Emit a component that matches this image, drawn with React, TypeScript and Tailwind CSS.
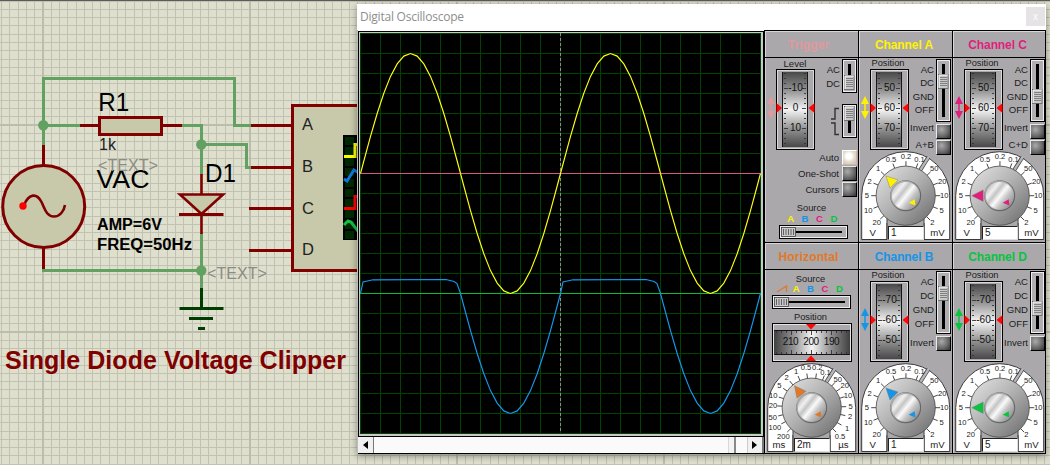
import React from "react";

const YELLOW = "#fff200";
const BLUE = "#1694e8";
const PINK = "#e01f7c";
const GREEN = "#08c440";
const ORANGE = "#e0782a";

function Schematic() {
  const wire = "#63a163";
  const red = "#800000";
  const minor: number[] = [];
  for (let i = -5; i < 130; i++) minor.push(i);
  return (
    <svg width="1050" height="465" className="block" fontFamily="Liberation Sans, Arial, sans-serif">
      <rect width="1050" height="465" fill="#dfdfce" />
      <g fill="#c2c2b2" shapeRendering="crispEdges">
        {minor.map((i) => (
          <rect key={"v" + i} x={Math.round(42.5 + i * 8.28)} y="0" width="1" height="465" />
        ))}
        {minor.slice(0, 65).map((i) => (
          <rect key={"h" + i} x="0" y={Math.round(124.7 + (i - 10) * 8.27)} width="1050" height="1" />
        ))}
        {[42, 249, 456, 663, 870].map((x) => (
          <rect key={x} x={x} y="0" width="2" height="465" fill="#bdbdae" />
        ))}
        {[124, 331].map((y) => (
          <rect key={y} x="0" y={y} width="1050" height="2" fill="#bdbdae" />
        ))}
      </g>
      <rect width="1050" height="1" fill="#5c5a5c" />

      <g fill="none" stroke={wire} strokeWidth="3">
        <path d="M43.5 145V78.5H234.5V125.5H251" />
        <path d="M43 125.5H81M182 125.5H201.5V175" />
        <path d="M201.5 144.5H246.5V167.5H252" />
        <path d="M201.5 233V289M42 270.5H201.5" />
      </g>
      <g fill={wire}>
        <circle cx="43.3" cy="125.3" r="5.2" />
        <circle cx="201.3" cy="144.5" r="5.2" />
        <circle cx="201.3" cy="270.5" r="5.2" />
      </g>

      <g fill="none" stroke={red} strokeWidth="3">
        <path d="M43.5 145V166M43.5 248V269M80 125.5H98M163 125.5H182" />
        <rect x="99.5" y="117.5" width="62" height="17" fill="#c8c8aa" />
        <path d="M201.5 174V194M201.5 214V234M180 194.5H223L201.5 214Z" fill="#c8c8aa" strokeWidth="2.6" />
        <path d="M179 214.5H223.5" />
        <circle cx="43.7" cy="206.5" r="41" fill="#c8c8aa" />
        <path d="M24 205C29 193 37 193 41.5 202C45 209 46 216 54 216.5C60 216.5 64 211 65 205" strokeWidth="2.6" />
        <rect x="292.5" y="105.5" width="80" height="165" fill="#c8c8aa" />
        <path d="M251 125.5H292M251 167.5H292M249 208.5H292M249 250.5H292" />
      </g>
      <circle cx="23" cy="206" r="3.7" fill="#ff0000" />

      <g stroke="#003c00" strokeWidth="3">
        <path d="M201.5 288V308M179.5 308.5H223.5M189 318.5H213M198 328.5H205" />
      </g>

      <rect x="343" y="135" width="30" height="105" fill="#000" />
      <g fill="#002800">
        {[137, 147, 158, 168, 179, 189, 199, 210, 221, 231].map((y) => (
          <rect key={y} x="345" y={y} width="9" height="8" />
        ))}
      </g>
      <g fill="none" strokeWidth="3">
        <path d="M344 156.5H355V144.5H360" stroke="#ffff00" />
        <path d="M344 179L347 181L354 170L359 173" stroke="#0a78e0" />
        <path d="M344 208.5H355V196.5H360" stroke="#ff0000" />
        <path d="M344 225L348 221L351 222L358 231" stroke="#10c040" />
      </g>

      <g fill="#000">
        <text x="98.3" y="110.7" fontSize="25.5" textLength="31" lengthAdjust="spacingAndGlyphs">R1</text>
        <text x="99" y="150" fontSize="16" fill="#222">1k</text>
        <text x="96.5" y="187.8" fontSize="25.5" textLength="53" lengthAdjust="spacingAndGlyphs">VAC</text>
        <text x="205" y="181.7" fontSize="25.5" textLength="31" lengthAdjust="spacingAndGlyphs">D1</text>
        <text x="97" y="230" fontSize="16" fontWeight="bold" textLength="65" lengthAdjust="spacingAndGlyphs">AMP=6V</text>
        <text x="97" y="250" fontSize="16" fontWeight="bold" textLength="95" lengthAdjust="spacingAndGlyphs">FREQ=50Hz</text>
      </g>
      <g fill="#222" fontSize="16.5">
        <text x="302" y="130">A</text>
        <text x="302" y="172.3">B</text>
        <text x="302" y="213.5">C</text>
        <text x="302" y="255.2">D</text>
      </g>
      <g fill="#8c8c84" fontSize="16">
        <text x="98" y="170.5" textLength="60" lengthAdjust="spacingAndGlyphs">&lt;TEXT&gt;</text>
        <text x="207" y="279" textLength="60" lengthAdjust="spacingAndGlyphs">&lt;TEXT&gt;</text>
      </g>
      <text x="5" y="369" fontSize="25" fontWeight="bold" fill="#800000" textLength="341">
        Single Diode Voltage Clipper
      </text>
    </svg>
  );
}

function sinePoints(from: number, to: number, shift: number, mid: number) {
  const xs = [from];
  for (let x = from + 10 / 3; x < to; x += 20 / 3) xs.push(x);
  xs.push(to);
  return xs
    .map((x) => `${(shift + x + 0.5).toFixed(2)},${(mid - 120 * Math.sin((x * Math.PI) / 100)).toFixed(1)}`)
    .join(" ");
}

function clippedTop(o: number) {
  return ` ${o + 0.5},260.5 ${o + 3},249 ${o + 13},246.8 ${o + 86},246.5 ${o + 94},248.5 ${o + 97},250.5 `;
}

function Plot() {
  const lines = Array.from({ length: 21 }, (_, i) => i * 20);
  return (
    <svg width="401" height="401" className="block bg-black">
      <g fill="#004200" shapeRendering="crispEdges">
        {lines.map((v) => (
          <React.Fragment key={v}>
            <rect x={v} y="0" width="1" height="401" />
            <rect x="0" y={v} width="401" height="1" />
          </React.Fragment>
        ))}
      </g>
      <path d="M200.5 0V400" stroke="#8c8c8c" strokeDasharray="3 2" />
      <rect y="140" width="401" height="1" fill="#d8587c" />
      <rect y="260" width="401" height="1" fill="#10b838" />
      <g fill="none" strokeWidth="1.15">
        <polyline points={sinePoints(0, 400, 0, 140.5)} stroke="#ffff10" />
        <polyline
          points={clippedTop(0) + sinePoints(100, 200, 0, 260.5) + clippedTop(200) + sinePoints(100, 200, 200, 260.5)}
          stroke="#1698ec"
        />
      </g>
    </svg>
  );
}

function VWheel({ labels, color, id }: { labels: string[]; color: string; id: string }) {
  const ticks = Array.from({ length: 15 }, (_, i) => 5 + i * 5);
  return (
    <div className="flex">
      <svg width="11" height="81" className="block shrink-0">
        <path d="M6 27L10 35H2ZM6 50L2 42H10Z" fill={color} />
        <path d="M6 32V45" stroke={color} strokeWidth="1.5" />
      </svg>
      <svg width="39" height="81" className="block shrink-0" fontFamily="Liberation Sans, Arial, sans-serif">
        <defs>
          <linearGradient id={id} x2="0" y2="1">
            <stop offset="0" stopColor="#484848" />
            <stop offset=".25" stopColor="#959595" />
            <stop offset=".5" stopColor="#f4f4f4" />
            <stop offset=".75" stopColor="#959595" />
            <stop offset="1" stopColor="#484848" />
          </linearGradient>
        </defs>
        <rect x=".5" y=".5" width="38" height="80" fill="#aaa8ab" stroke="#000" />
        <rect x="1.5" y="1.5" width="36" height="78" fill="none" stroke="#e4e4e4" strokeWidth=".8" />
        <rect x="6" y="3" width="26" height="75" fill={`url(#${id})`} />
        <path d="M6.5 3V78M31.5 3V78" stroke="#151515" />
        {ticks.map((y, i) => (
          <path key={y} d={`M8 ${y - 0.5}h${i % 4 === 3 ? 4 : 2}M30 ${y - 0.5}h-${i % 4 === 3 ? 4 : 2}`} stroke="#333" strokeWidth=".9" />
        ))}
        <path d="M0.5 34L6 39L0.5 44ZM38.5 34L32.5 39L38.5 44Z" fill="#ff0808" />
        <g fontSize="10" textAnchor="middle" fill="#111">
          <text x="19.5" y="22">{labels[0]}</text>
          <text x="19.5" y="42.300">{labels[1]}</text>
          <text x="19.5" y="62">{labels[2]}</text>
        </g>
      </svg>
    </div>
  );
}

function HWheel() {
  const ticks = Array.from({ length: 15 }, (_, i) => 5 + i * 5);
  return (
    <svg width="80" height="39" className="block shrink-0" fontFamily="Liberation Sans, Arial, sans-serif">
      <defs>
        <linearGradient id="hw">
          <stop offset="0" stopColor="#404040" />
          <stop offset=".25" stopColor="#909090" />
          <stop offset=".5" stopColor="#f4f4f4" />
          <stop offset=".75" stopColor="#909090" />
          <stop offset="1" stopColor="#404040" />
        </linearGradient>
      </defs>
      <rect x=".5" y=".5" width="79" height="38" fill="#aaa8ab" stroke="#000" />
      <rect x="1.5" y="1.5" width="77" height="36" fill="none" stroke="#e4e4e4" />
      <rect x="2" y="7" width="76" height="25" fill="url(#hw)" />
      <path d="M2 7.5H78M2 31.5H78" stroke="#151515" />
      {ticks.map((x, i) => (
        <path key={x} d={`M${x - 0.5} 8v${i % 4 === 3 ? 4 : 2}M${x - 0.5} 31v-${i % 4 === 3 ? 4 : 2}`} stroke="#333" strokeWidth=".9" />
      ))}
      <path d="M34 1H44L39 6.5ZM34 38H44L39 32.5Z" fill="#ff0808" />
      <g fontSize="10" textAnchor="middle" fill="#111" letterSpacing="-.4">
        <text x="18.5" y="22.3">210</text>
        <text x="39" y="22.3">200</text>
        <text x="59.5" y="22.3">190</text>
      </g>
    </svg>
  );
}

function VSwitch({ height, top }: { height: number; top: number }) {
  return (
    <svg width="15" height={height} className="block shrink-0">
      <rect x=".5" y=".5" width="14" height={height - 1} fill="#b0aeb1" stroke="#000" />
      <rect x="1.5" y="1.5" width="12" height={height - 3} fill="none" stroke="#eee" />
      <rect x="6" y="5" width="3" height={height - 10} fill="#000" />
      <rect x="2.5" y={top + 0.5} width="9.5" height="14" fill="#c9c9c9" stroke="#555" strokeWidth=".7" />
      <path d={`M3 ${top + 14}V${top + 1}H12`} fill="none" stroke="#fff" strokeWidth=".9" />
      {[3, 5, 7, 9, 11].map((d) => (
        <path key={d} d={`M4 ${top + d + 0.5}h7`} stroke="#777" strokeWidth=".9" />
      ))}
    </svg>
  );
}

function HSwitch({ width }: { width: number }) {
  return (
    <svg width={width} height="14" className="block shrink-0">
      <rect x=".5" y=".5" width={width - 1} height="13" fill="#b0aeb1" stroke="#000" />
      <rect x="1.5" y="1.5" width={width - 3} height="11" fill="none" stroke="#eee" />
      <rect x="16" y="6" width={width - 27 + 5} height="2" fill="#000" />
      <rect x="2.5" y="2.5" width="14" height="9" fill="#c9c9c9" stroke="#444" strokeWidth=".8" />
      {[4.5, 7, 9.5, 12, 14.5].map((d) => (
        <path key={d} d={`M${d} 4v6`} stroke="#555" strokeWidth=".9" />
      ))}
    </svg>
  );
}

function PushButton({ lit = false }: { lit?: boolean }) {
  return lit ? (
    <div className="h-[15px] w-[15px] shrink-0 border border-t-white border-l-white border-r-[#d8b0ac] border-b-[#d8b0ac] bg-[radial-gradient(circle_at_45%_40%,#ffffff_25%,#e4dccb_55%,#cbbdb2_100%)]" />
  ) : (
    <div className="h-[15px] w-[15px] shrink-0 border border-t-[#e8e8e8] border-l-[#e8e8e8] border-r-black border-b-black bg-[radial-gradient(circle_at_35%_35%,#aaaaaa_0%,#707070_50%,#303030_100%)]" />
  );
}

type Mark = [string, number, number];

const VOLT_MARKS: Mark[] = [
  ["20", 17.7, 164.3], ["10", 9.3, 152.3], ["5", 7.8, 137.7], ["2", 10.7, 123.7],
  ["1", 19, 110.7], ["0.5", 32, 101], ["0.2", 47, 98.3], ["0.1", 60.5, 101],
  ["50", 75.3, 110.3], ["20", 83.3, 123.3], ["10", 85.3, 137.7], ["5", 82.7, 152.3], ["2", 73.3, 164.3],
];
const TIME_MARKS: Mark[] = [
  ["200", 18.3, 166], ["100", 9.9, 157.3], ["50", 7.7, 147.3], ["20", 8, 135.7],
  ["10", 8.3, 125.3], ["5", 14.3, 115.7], ["2", 21.7, 107.3], ["1", 31, 101.3],
  ["0.5", 41, 97.6], ["0.2", 52.2, 97.6], ["0.1", 60.5, 102.6], ["50", 72.7, 109.5],
  ["20", 79.7, 115.7], ["10", 83, 125.5], ["5", 85.5, 136.5], ["2", 85, 146.7], ["1", 82, 158.3], ["0.5", 75, 166],
];

function Dial({ id, color, marks, units, pointer, value }: {
  id: string; color: string; marks: Mark[]; units: [string, string]; pointer: number; value: string;
}) {
  const cx = 46.7, cy = 44.7, top = 93;
  return (
    <div className="relative h-[91px] w-[92px]">
      <svg width="92" height="91" className="block" fontFamily="Liberation Sans, Arial, sans-serif">
        <defs>
          <linearGradient id={id + "k"} x1="0" y1="0" x2="1" y2="1">
            <stop offset="0" stopColor="#e6e6e6" />
            <stop offset=".45" stopColor="#b4b4b4" />
            <stop offset="1" stopColor="#686868" />
          </linearGradient>
          <linearGradient id={id + "c"} x1="0" y1="0" x2="1" y2=".8">
            <stop offset="0" stopColor="#9c9c9c" />
            <stop offset=".3" stopColor="#f0f0f0" />
            <stop offset=".42" stopColor="#c4c4c4" />
            <stop offset=".56" stopColor="#fafafa" />
            <stop offset=".72" stopColor="#c4c4c4" />
            <stop offset="1" stopColor="#8c8c8c" />
          </linearGradient>
        </defs>
        <path d={`M2.7 88.5V${cy}A44 44 0 0 1 90.7 ${cy}V88.5H65V60H28V88.5Z`} fill="#fff" stroke="#3a3a3a" />
        <path d="M28 89V72L40 66H54L65 72V89Z" fill="#aaa8ab" />
        <path d="M28 88.5V72M65 88.5V72" stroke="#333" />
        <path d="M60 21L69.5 6" stroke="#3c3c3c" strokeWidth="4" />
        <path d="M60 21L70 5.5" stroke="#b8b6b9" strokeWidth="2.4" />
        {marks.map(([, x, y], i) => {
          const dx = x - cx, dy = y - top - cy, r = Math.hypot(dx, dy);
          return (
            <path
              key={"t" + i}
              d={`M${cx + (dx / r) * 29} ${cy + (dy / r) * 29}L${cx + (dx / r) * 34.5} ${cy + (dy / r) * 34.5}`}
              stroke="#333"
              strokeWidth=".9"
            />
          );
        })}
        <circle cx={cx} cy={cy} r="29.6" fill={`url(#${id}k)`} stroke="#484848" strokeWidth=".8" />
        <circle cx={cx} cy={cy} r="15.5" fill="#686868" />
        <circle cx={cx - 0.5} cy={cy - 0.5} r="14.8" fill="#aaa" />
        <circle cx={cx} cy={cy} r="13.8" fill={`url(#${id}c)`} />
        <path d="M-28 0L-16.5 -5.7V5.7Z" fill={color} stroke="#777" strokeWidth=".4" transform={`translate(${cx} ${cy}) rotate(${pointer})`} />
        <path d="M3 7L9 3.5L9.700 9.700Z" fill={color} transform={`translate(${cx} ${cy})`} />
        <g fontSize="7.6" textAnchor="middle" fill="#222">
          {marks.map(([t, x, y], i) => (
            <text key={i} x={x} y={y - top + 2.7}>{t}</text>
          ))}
        </g>
        <g fontSize="9.6" textAnchor="middle" fill="#222">
          <text x="13.8" y="84.8">{units[0]}</text>
          <text x="78.5" y="84.8">{units[1]}</text>
        </g>
      </svg>
      <div className="absolute top-[75px] left-[29px] flex h-[14px] w-[36px] items-center border border-t-[#222] border-l-[#222] border-r-[#ddd] border-b-[#ddd] bg-white pl-[2px] text-[10px] leading-none text-[#222]">
        {value}
      </div>
    </div>
  );
}

function Cell({ title, color, wide = false, children }: {
  title: string; color: string; wide?: boolean; children: React.ReactNode;
}) {
  return (
    <section className="h-full border-t border-l border-black bg-[#aaa8ab]">
      <h2
        className={
          (wide ? "pr-[7px] tracking-[0.15px] " : "pr-[4px] tracking-[-0.1px] ") +
          "flex h-[26px] items-center justify-center border-t border-l border-[#d8d6d9] pt-px text-[12px] leading-none font-bold"
        }
        style={{ color }}
      >
        {title}
      </h2>
      <div className="border-t border-black">
        <div className="h-[183px] border-l border-[#d0ced1]">
          <div className="-ml-px">{children}</div>
        </div>
      </div>
    </section>
  );
}

const LABEL = "flex h-[14px] items-center justify-end whitespace-nowrap text-[9.6px] leading-none";
const BUTTON_LABEL = "w-[74px] text-right text-[9.6px] leading-none";

function Channel({ name, color, labels, switchTop, pointer, value, sum }: {
  name: string; color: string; labels: string[]; switchTop: number; pointer: number; value: string; sum?: string;
}) {
  return (
    <Cell title={"Channel " + name} color={color}>
      <div className="flex h-[93px]">
        <div className="w-[50px] shrink-0">
          <div className="flex h-[11px] items-center justify-center pt-px pl-[8px] text-[9.3px] leading-none">Position</div>
          <VWheel id={"vw" + name} labels={labels} color={color} />
        </div>
        <div className="z-10 flex w-[25px] shrink-0 flex-col items-end pt-[5px]">
          <div className={LABEL}>AC</div>
          <div className={LABEL}>DC</div>
          <div className={LABEL}>GND</div>
          <div className={LABEL}>OFF</div>
          <div className={LABEL + " mt-[5px]"}>Invert</div>
          {sum && <div className={LABEL + " mt-[3px]"}>{sum}</div>}
        </div>
        <div className="z-10 ml-[2px] flex flex-col pt-px">
          <VSwitch height={63} top={switchTop} />
          <div className="mt-[2px] flex flex-col gap-px">
            <PushButton />
            {sum && <PushButton />}
          </div>
        </div>
      </div>
      <Dial id={"d" + name} color={color} marks={VOLT_MARKS} units={["V", "mV"]} pointer={pointer} value={value} />
    </Cell>
  );
}

function SourceLetters() {
  return (
    <>
      <span className="w-[14.4px] text-center text-[#fff200]">A</span>
      <span className="w-[14.4px] text-center text-[#1694e8]">B</span>
      <span className="w-[14.4px] text-center text-[#e01f7c]">C</span>
      <span className="w-[14.4px] text-center text-[#08c440]">D</span>
    </>
  );
}

function Trigger() {
  return (
    <Cell title="Trigger" color="#e0999c" wide>
      <div className="flex h-[92px]">
        <div className="w-[50px] shrink-0">
          <div className="flex h-[11px] items-center justify-center pt-px pl-[10px] text-[9.6px] leading-none">Level</div>
          <VWheel id="vwT" labels={["-10", "0", "10"]} color="#e0999c" />
        </div>
        <div className="flex w-[25px] shrink-0 flex-col items-end pt-[5px]">
          <div className={LABEL}>AC</div>
          <div className={LABEL}>DC</div>
          <svg width="10" height="30" className="mt-[16px] block" fill="none" stroke="#333" strokeWidth="1.4">
            <path d="M1 12H5V1.5H9M1 16H5V27.5H9" />
          </svg>
        </div>
        <div className="ml-[2px] flex flex-col gap-[11px] pt-px">
          <VSwitch height={34} top={16} />
          <VSwitch height={34} top={2} />
        </div>
      </div>
      <div className="flex flex-col gap-px">
        <div className="flex items-center gap-[3px]"><span className={BUTTON_LABEL}>Auto</span><PushButton lit /></div>
        <div className="flex items-center gap-[3px]"><span className={BUTTON_LABEL}>One-Shot</span><PushButton /></div>
        <div className="flex items-center gap-[3px]"><span className={BUTTON_LABEL}>Cursors</span><PushButton /></div>
      </div>
      <div className="mt-[6px] h-[10px] text-center text-[9.3px] leading-[10px]">Source</div>
      <div className="flex h-[12px] items-center pl-[18.5px] text-[9.6px] leading-none font-bold"><SourceLetters /></div>
      <div className="pl-[14px]"><HSwitch width={69} /></div>
    </Cell>
  );
}

function Horizontal() {
  return (
    <Cell title="Horizontal" color={ORANGE} wide>
      <div className="h-[13px] pt-[4px] pr-[2px] text-center text-[9.3px] leading-[10px]">Source</div>
      <div className="flex h-[12px] items-center pl-[11px] text-[9.6px] leading-none font-bold">
        <svg width="13" height="8" className="block"><path d="M1 7L10.5 1V7" fill="none" stroke={ORANGE} strokeWidth="1.3" /></svg>
        <SourceLetters />
      </div>
      <div className="pl-[7px]"><HSwitch width={79} /></div>
      <div className="h-[14px] pt-[3px] pr-[2px] text-center text-[9.3px] leading-[10px]">Position</div>
      <div className="pl-[7px]"><HWheel /></div>
      <div className="mt-px">
        <Dial id="dH" color={ORANGE} marks={TIME_MARKS} units={["ms", "µs"]} pointer={52} value="2m" />
      </div>
    </Cell>
  );
}

export default function App() {
  return (
    <main className="relative h-[465px] w-[1050px] overflow-hidden font-['Liberation_Sans',Arial,sans-serif] text-[#1c1c1c]">
      <Schematic />
      <div className="absolute top-[4px] left-[357px] flex h-[450px] w-[689px] flex-col bg-white shadow-[0_2px_7px_rgba(0,0,0,0.4)]">
        <header className="flex h-[26px] shrink-0 items-start justify-between">
          <h1 className="pt-[6px] pl-[3px] font-['Open_Sans','Noto_Sans',sans-serif] text-[12px] leading-[14px] tracking-[-0.22px] text-[#8e8e8e]">
            Digital Oscilloscope
          </h1>
          <div className="mt-[3px] mr-px flex h-[19px] w-[19px] items-center justify-center bg-[#e5e3e5] text-[10px] leading-none text-white">x</div>
        </header>
        <div className="flex h-[424px]">
          <div className="flex w-[407px] shrink-0 flex-col border-l border-[#bbbbbb] pt-px">
            <div className="h-[405px] border-x border-t border-black">
              <div className="h-[404px] w-[404px] border-t border-r-2 border-b-2 border-l border-[#c9c9c9] bg-black">
                <Plot />
              </div>
            </div>
            <div className="flex h-[18px] border-t border-b border-black bg-[#fafafa]">
              <div className="flex w-[16px] items-center justify-center border-r border-[#777] bg-[#f0f0f0]">
                <svg width="6" height="8"><path d="M5 0V8L0 4Z" /></svg>
              </div>
              <div className="flex-1" />
              <div className="w-[8px] border-l border-r-2 border-l-[#d8d8d8] border-r-[#888] bg-[#f3f3f3]" />
              <div className="w-[11px]" />
              <div className="flex w-[17px] items-center justify-center border-l border-r-2 border-l-[#ccc] border-r-[#777] bg-[#f0f0f0]">
                <svg width="6" height="8"><path d="M0 0V8L5 4Z" /></svg>
              </div>
            </div>
          </div>
          <div className="grid w-[282px] shrink-0 grid-cols-[94px_94px_93px] grid-rows-[212px_211px] overflow-hidden border-r border-b border-black">
            <Trigger />
            <Channel name="A" color={YELLOW} labels={["50", "60", "70"]} switchTop={15} pointer={45} value="1" sum="A+B" />
            <Channel name="C" color={PINK} labels={["50", "60", "70"]} switchTop={30} pointer={0} value="5" sum="C+D" />
            <Horizontal />
            <Channel name="B" color={BLUE} labels={["-70", "-60", "-50"]} switchTop={15} pointer={45} value="1" />
            <Channel name="D" color={GREEN} labels={["-70", "-60", "-50"]} switchTop={30} pointer={0} value="5" />
          </div>
        </div>
      </div>
    </main>
  );
}
